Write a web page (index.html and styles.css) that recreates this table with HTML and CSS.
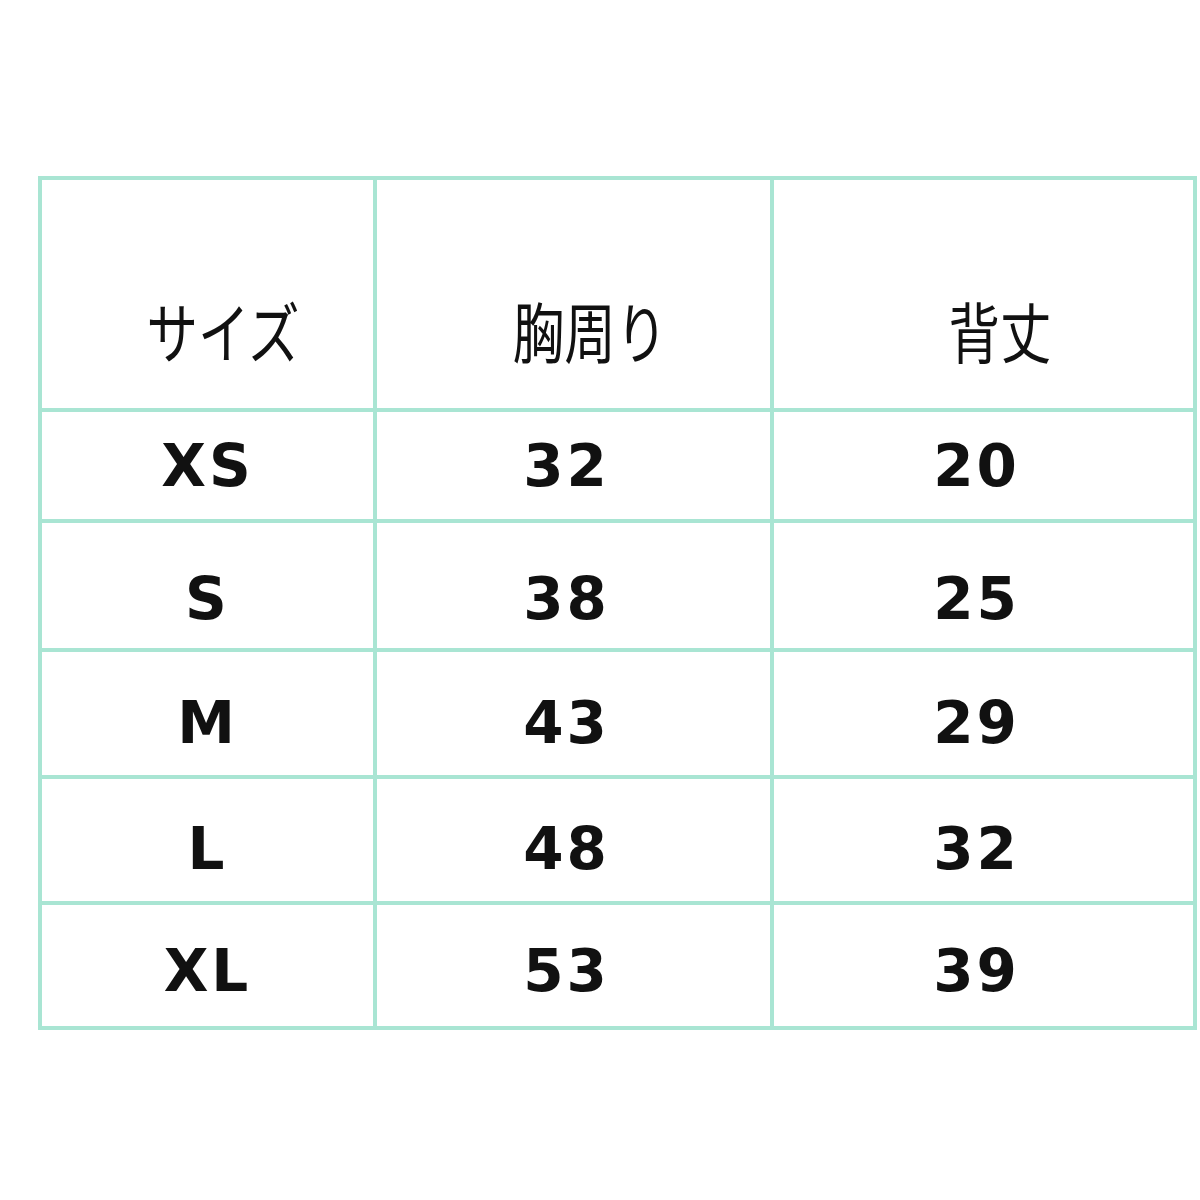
FILE: index.html
```html
<!DOCTYPE html>
<html lang="ja">
<head>
<meta charset="utf-8">
<title>サイズ表</title>
<link rel="stylesheet" href="styles.css">
</head>
<body>
<div class="sheet">
  <div class="grid">
    <div class="cell head"><span class="jp">サイズ</span></div>
    <div class="cell head"><span class="jp">胸周り</span></div>
    <div class="cell head"><span class="jp">背丈</span></div>

    <div class="cell r1"><span class="val">XS</span></div>
    <div class="cell r1 num"><span class="val">32</span></div>
    <div class="cell r1 num"><span class="val">20</span></div>

    <div class="cell r2"><span class="val">S</span></div>
    <div class="cell r2 num"><span class="val">38</span></div>
    <div class="cell r2 num"><span class="val">25</span></div>

    <div class="cell r3"><span class="val">M</span></div>
    <div class="cell r3 num"><span class="val">43</span></div>
    <div class="cell r3 num"><span class="val">29</span></div>

    <div class="cell r4"><span class="val">L</span></div>
    <div class="cell r4 num"><span class="val">48</span></div>
    <div class="cell r4 num"><span class="val">32</span></div>

    <div class="cell r5"><span class="val">XL</span></div>
    <div class="cell r5 num"><span class="val">53</span></div>
    <div class="cell r5 num"><span class="val">39</span></div>
  </div>
</div>
</body>
</html>
```
FILE: styles.css
```css
html, body {
  margin: 0;
  padding: 0;
  background: #ffffff;
}

.sheet {
  padding-top: 176px;
  padding-left: 38px;
}

.grid {
  display: grid;
  grid-template-columns: 331px 393px 419px;
  grid-template-rows: 228px 107px 125px 123px 122px 121px;
  gap: 4px;
  padding: 4px;
  background: #a9e5d3;
  width: max-content;
}

.cell {
  background: #ffffff;
  display: flex;
  align-items: center;
  justify-content: center;
  box-sizing: border-box;
}

.head {
  padding-top: 70px;
  padding-left: 32px;
}

.jp {
  display: inline-block;
  font-family: "Noto Sans CJK JP", "Noto Sans", sans-serif;
  font-weight: 400;
  font-size: 66px;
  line-height: 1;
  color: #111111;
  transform: scaleX(0.78);
}

.val {
  font-family: "DejaVu Sans", "Liberation Sans", sans-serif;
  font-weight: 700;
  font-size: 58px;
  line-height: 1;
  letter-spacing: 3px;
  color: #111111;
}

.num {
  padding-right: 14px;
}

.r1 { padding-top: 0; }
.r2 { padding-top: 26px; }
.r3 { padding-top: 18px; }
.r4 { padding-top: 18px; }
.r5 { padding-top: 10px; }
```
